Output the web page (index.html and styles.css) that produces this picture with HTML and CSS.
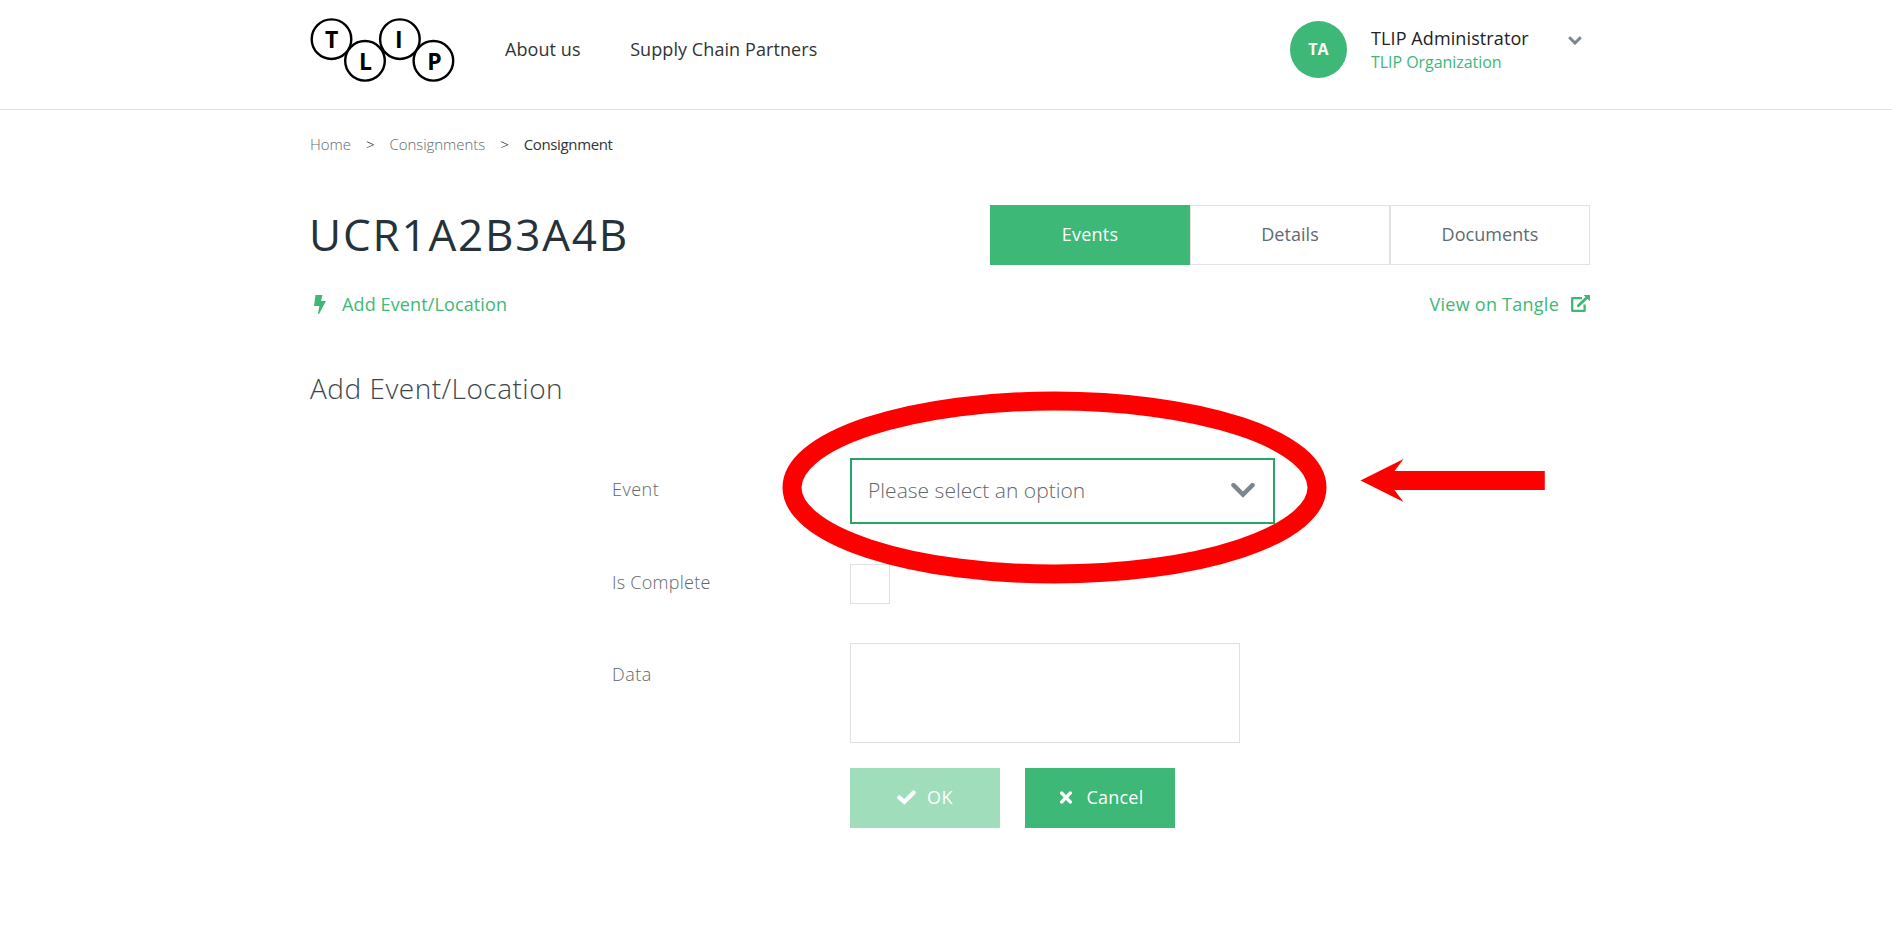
FILE: index.html
```html
<!DOCTYPE html>
<html lang="en">
<head>
<meta charset="utf-8">
<title>TLIP - Consignment</title>
<link rel="stylesheet" href="styles.css">
</head>
<body>
<header class="header">
  <div class="container header-inner">
    <svg class="logo" viewBox="0 0 146 64" width="146" height="64">
      <g fill="#fff" stroke="#000" stroke-width="2.4">
        <circle cx="21.5" cy="21.200" r="19.800"/>
        <circle cx="89.900" cy="21.200" r="19.800"/>
        <circle cx="55" cy="42.800" r="19.800"/>
        <circle cx="123.400" cy="42.800" r="19.800"/>
      </g>
      <g class="logo-letters">
        <text x="21.700" y="30">T</text>
        <text x="55.600" y="51.500">L</text>
        <text x="88.900" y="30">I</text>
        <text x="124.400" y="51.500">P</text>
      </g>
    </svg>
    <nav class="nav">
      <a class="nav-link">About us</a>
      <a class="nav-link">Supply Chain Partners</a>
    </nav>
    <div class="account">
      <div class="avatar">TA</div>
      <div class="who">
        <div class="name">TLIP Administrator</div>
        <div class="org">TLIP Organization</div>
      </div>
      <svg class="caret" viewBox="0 0 14 9" width="14" height="9"><path d="M1.200 1.200 7 7l5.800-5.800" fill="none" stroke="#7c868d" stroke-width="3"/></svg>
    </div>
  </div>
</header>
<main class="container">
  <div class="crumbs">
    <a>Home</a><span class="sep">&gt;</span><a>Consignments</a><span class="sep">&gt;</span><span class="current">Consignment</span>
  </div>
  <div class="title-row">
    <h1 class="title">UCR1A2B3A4B</h1>
    <div class="tabs">
      <div class="tab active">Events</div>
      <div class="tab">Details</div>
      <div class="tab">Documents</div>
    </div>
  </div>
  <div class="links">
    <a class="link"><svg class="bolt" viewBox="0 0 12 19" width="12" height="19"><path fill="currentColor" d="M1.500 0H8.500L7 6H12L5 19H4L5.300 11H0z"/></svg><span>Add Event/Location</span></a>
    <a class="link tangle"><span>View on Tangle</span><svg viewBox="0 0 19 17" width="19" height="17"><path d="M11 3.200H1.200V15.800H13.600V9.500" fill="none" stroke="currentColor" stroke-width="2.300" stroke-linejoin="round"/><path d="M7.300 10.700 16 2.500" stroke="currentColor" stroke-width="2.800" stroke-linecap="round"/><path d="M12.500 0H19V6.300z" fill="currentColor"/></svg></a>
  </div>
  <h2 class="subtitle">Add Event/Location</h2>
  <form class="form">
    <label class="label">Event</label>
    <div class="field event-field">
      <div class="select"><span>Please select an option</span><svg viewBox="0 0 24 15" width="24" height="15"><path d="M2.500 2.200 12 11.600l9.500-9.400" fill="none" stroke="#7c868d" stroke-width="4.500" stroke-linecap="round"/></svg></div>
      <svg class="marker" viewBox="0 0 764 194" width="764" height="194"><ellipse cx="272.500" cy="97.500" rx="262.500" ry="86.500" fill="none" stroke="#f00" stroke-width="19"/><path d="M578.500 90.500 621.500 69 612.500 81H762.800V100H612.500L621.500 112z" fill="#f00"/></svg>
    </div>
    <label class="label check-label">Is Complete</label>
    <div class="checkbox"></div>
    <label class="label data-label">Data</label>
    <div class="textarea"></div>
    <div class="buttons">
      <div class="button disabled"><svg viewBox="0 0 19 15" width="19" height="15"><path d="M2.300 7.500 7.200 11.900 16.700 2.400" fill="none" stroke="#fff" stroke-width="4.200" stroke-linecap="round"/></svg><span>OK</span></div>
      <div class="button cancel"><svg viewBox="0 0 12 13" width="12" height="13"><path d="M1.800 2.100 10.200 10.900M10.200 2.100 1.800 10.900" stroke="#fff" stroke-width="3.500" stroke-linecap="round"/></svg><span>Cancel</span></div>
    </div>
  </form>
</main>
</body>
</html>
```
FILE: styles.css
```css
* { box-sizing: border-box; }
body { margin: 0; background: #fff; color: #333; font-family: "Open Sans", sans-serif; font-size: 18px; font-weight: 400; line-height: 24px; }
.container { width: 1280px; margin-left: 310px; }
.header { height: 110px; border-bottom: 1px solid #dfe1e1; }
.header-inner { display: flex; align-items: center; height: 98px; }
.logo { display: block; flex: none; margin-top: 2px; }
.logo-letters { font: 700 23px "Open Sans", sans-serif; text-anchor: middle; fill: #000; }
.nav { display: flex; gap: 49.500px; margin: -1px 0 0 49px; letter-spacing: .08px; white-space: nowrap; }
.account { display: flex; align-items: center; margin-left: auto; }
.avatar { width: 57px; height: 57px; margin-right: 24px; border-radius: 50%; background: #3db876; color: #fff; font-size: 16px; font-weight: 700; line-height: 57px; text-align: center; }
.who { width: 182px; padding-top: 1px; white-space: nowrap; }
.name { color: #222; letter-spacing: .1px; }
.org { color: #3db876; font-size: 16px; letter-spacing: -.05px; }
.caret { margin: -18px 8px 0 15px; }
.crumbs { display: flex; gap: 15px; padding-top: 22px; color: #5f686e; font-size: 15px; font-weight: 300; letter-spacing: -.05px; }
.sep { color: #222; }
.current { color: #333; font-weight: 400; letter-spacing: -.35px; }
.title-row { display: flex; justify-content: space-between; height: 109px; padding-top: 49px; }
.title { margin: 1px 0 0 -1px; color: #25323a; font-size: 44px; font-weight: 400; line-height: 56px; letter-spacing: 1.820px; }
.tabs { display: flex; width: 600px; height: 60px; }
.tab { flex: 1; border: 1px solid #e2e3e3; color: #606a71; line-height: 57px; text-align: center; letter-spacing: .05px; }
.tab.active { border-color: #3db876; background: #3db876; color: #fff; font-weight: 500; letter-spacing: .2px; }
.links { display: flex; justify-content: space-between; padding-top: 26px; }
.link { display: flex; align-items: center; color: #3db876; letter-spacing: .12px; }
.link span { padding-top: 1px; }
.bolt { margin: 2px 16px 0 4px; }
.tangle { gap: 12px; letter-spacing: .25px; }
.subtitle { margin: 56px 0 0; color: #3c464d; font-size: 28px; font-weight: 300; line-height: 32px; letter-spacing: .5px; }
.form { display: grid; grid-template-columns: 238px 425px; grid-template-rows: 66px 40px 100px 60px; row-gap: 40px; padding: 54px 0 0 302px; }
.label { padding-top: 19px; color: #5f686e; font-weight: 300; letter-spacing: .5px; }
.check-label { padding-top: 6px; letter-spacing: .25px; }
.data-label { padding-top: 18px; }
.event-field { position: relative; }
.select { display: flex; align-items: center; justify-content: space-between; height: 66px; padding: 0 18px 2px 16px; border: 2px solid #29a366; color: #5f686e; font-size: 21px; font-weight: 300; letter-spacing: .02px; }
.marker { position: absolute; left: -68px; top: -68px; }
.checkbox { width: 40px; height: 40px; border: 1px solid #dfe1e1; }
.textarea { width: 390px; height: 100px; margin-top: -1px; border: 1px solid #dfe1e1; }
.buttons { grid-column: 2; display: flex; gap: 25px; margin-top: -16px; }
.button { display: flex; align-items: center; justify-content: center; gap: 11px; width: 150px; height: 60px; padding-bottom: 2px; background: #3db876; color: #fff; font-weight: 500; letter-spacing: .2px; }
.disabled { background: #9fddbb; font-weight: 400; letter-spacing: .6px; }
.cancel { gap: 15px; padding-left: 3px; }
```
